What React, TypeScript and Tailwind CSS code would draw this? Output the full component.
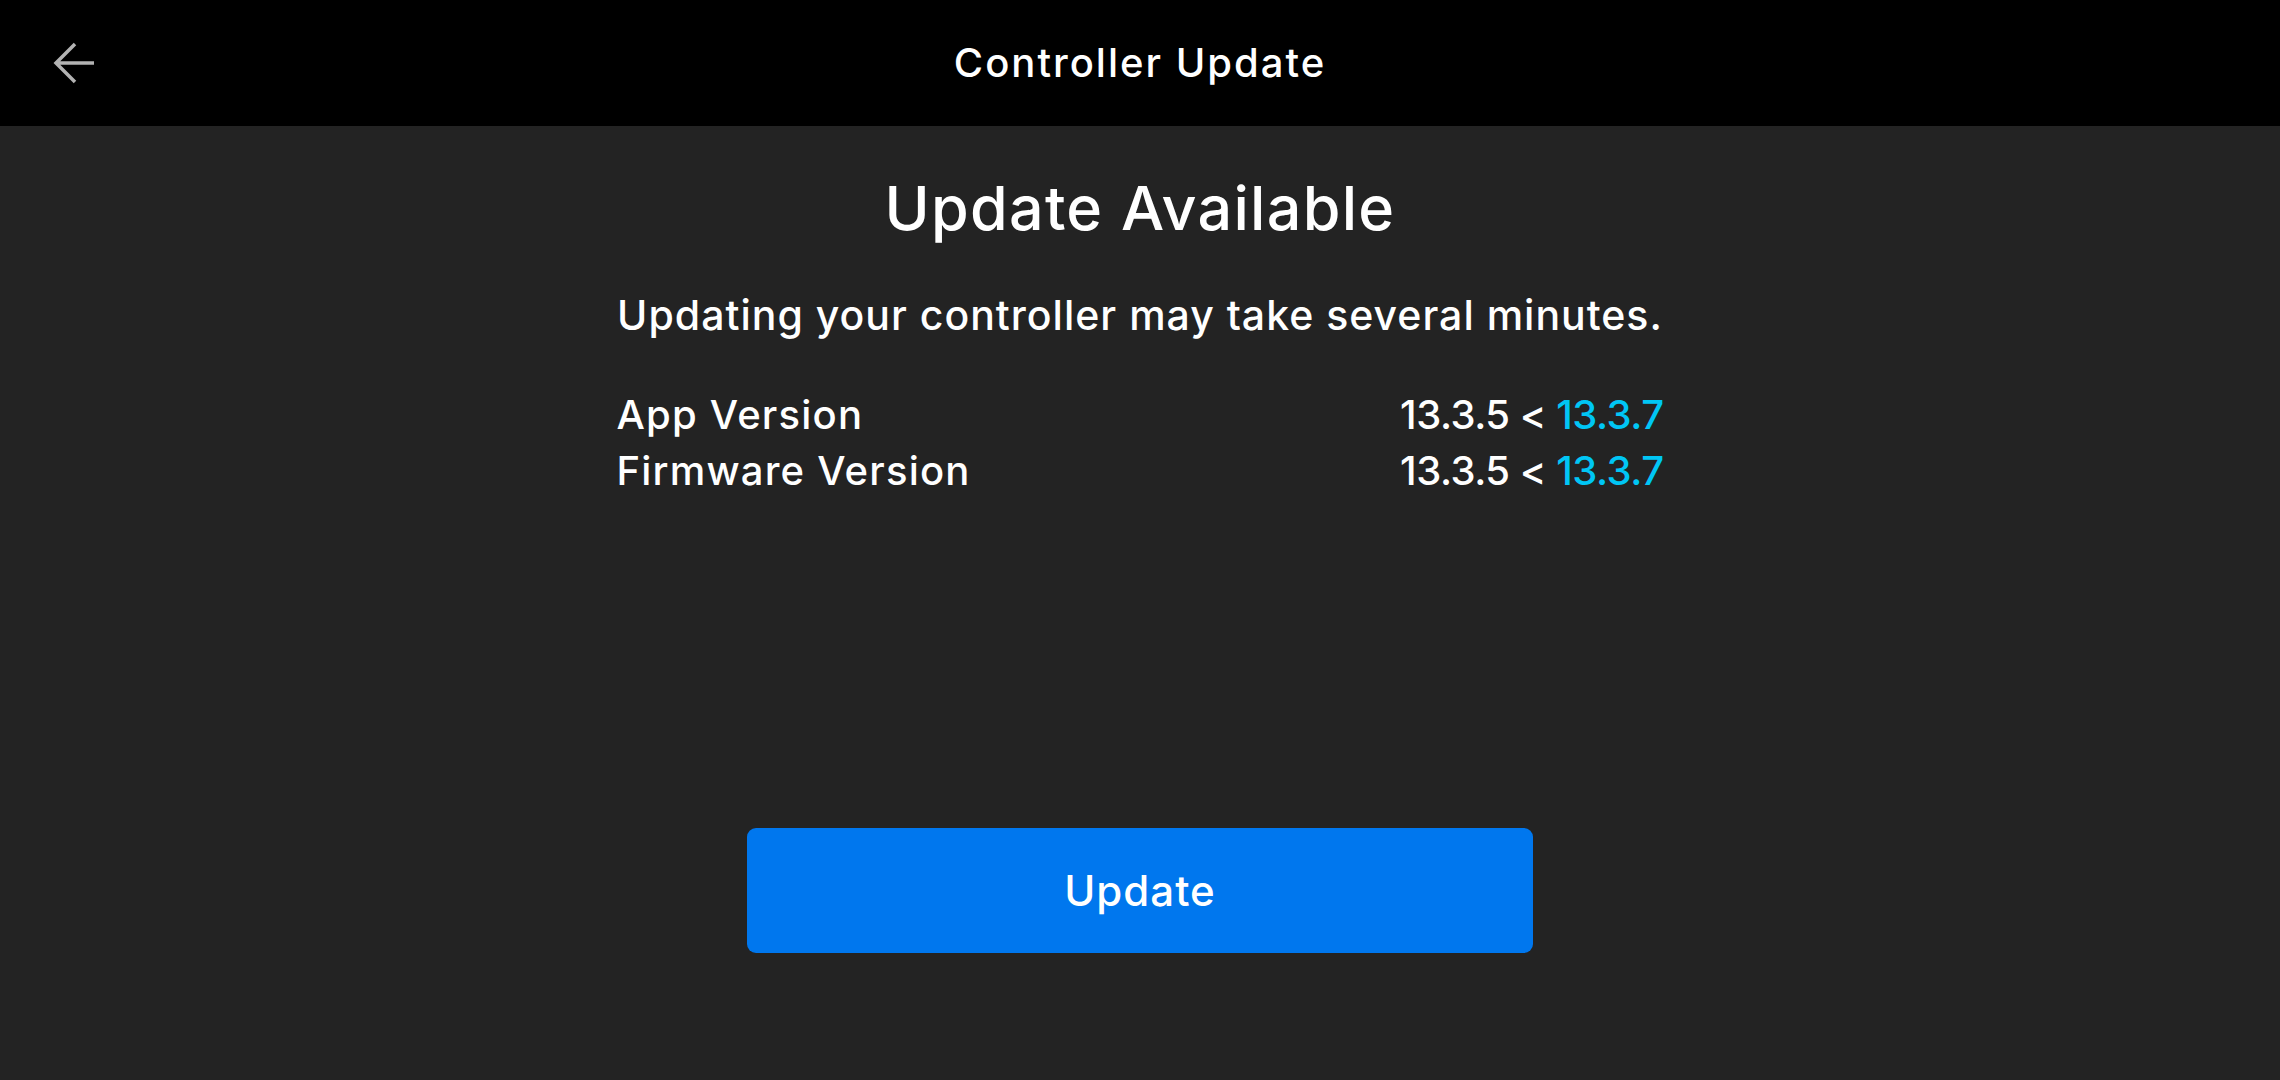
import React from 'react';

const versions = [
  { label: 'App Version', current: '13.3.5', latest: '13.3.7' },
  { label: 'Firmware Version', current: '13.3.5', latest: '13.3.7' },
];

const BackArrow = () => (
  <svg width="44" height="44" viewBox="0 0 44 44" fill="none">
    <path d="M42 22H4M23 3L4 22L23 41" stroke="#b3b3b3" strokeWidth="3.5" strokeLinecap="butt" strokeLinejoin="miter" />
  </svg>
);

export default function App() {
  return (
    <div className="w-[2280px] h-[1080px] bg-[#232323] flex flex-col text-white font-['Inter',sans-serif] overflow-hidden">
      {/* top bar */}
      <header className="h-[126px] bg-black grid grid-cols-[1fr_auto_1fr] items-center shrink-0">
        <button className="justify-self-start ml-[52px] flex items-center">
          <BackArrow />
        </button>
        <h1 className="text-[40px] font-medium tracking-[2px]">Controller Update</h1>
        <div />
      </header>

      <main className="flex-1 flex flex-col items-center">
        <h2 className="mt-[46px] text-[61px] leading-[72px] font-medium tracking-[1.3px]">Update Available</h2>
        <p className="mt-[46px] text-[41px] leading-[50px] font-medium tracking-[1px]">
          Updating your controller may take several minutes.
        </p>

        <div className="mt-[47px] w-[1047px] flex flex-col">
          {versions.map((v) => (
            <div key={v.label} className="flex justify-between text-[40px] leading-[56px] font-medium">
              <span className="tracking-[1.2px]">{v.label}</span>
              <span className="tracking-[-0.5px]">
                {v.current} &lt; <span className="text-[#00c6f5]">{v.latest}</span>
              </span>
            </div>
          ))}
        </div>

        <button className="mt-[329px] w-[786px] h-[125px] rounded-[9px] bg-[#0077ee] text-[42px] font-medium tracking-[1px]">
          Update
        </button>
      </main>
    </div>
  );
}
